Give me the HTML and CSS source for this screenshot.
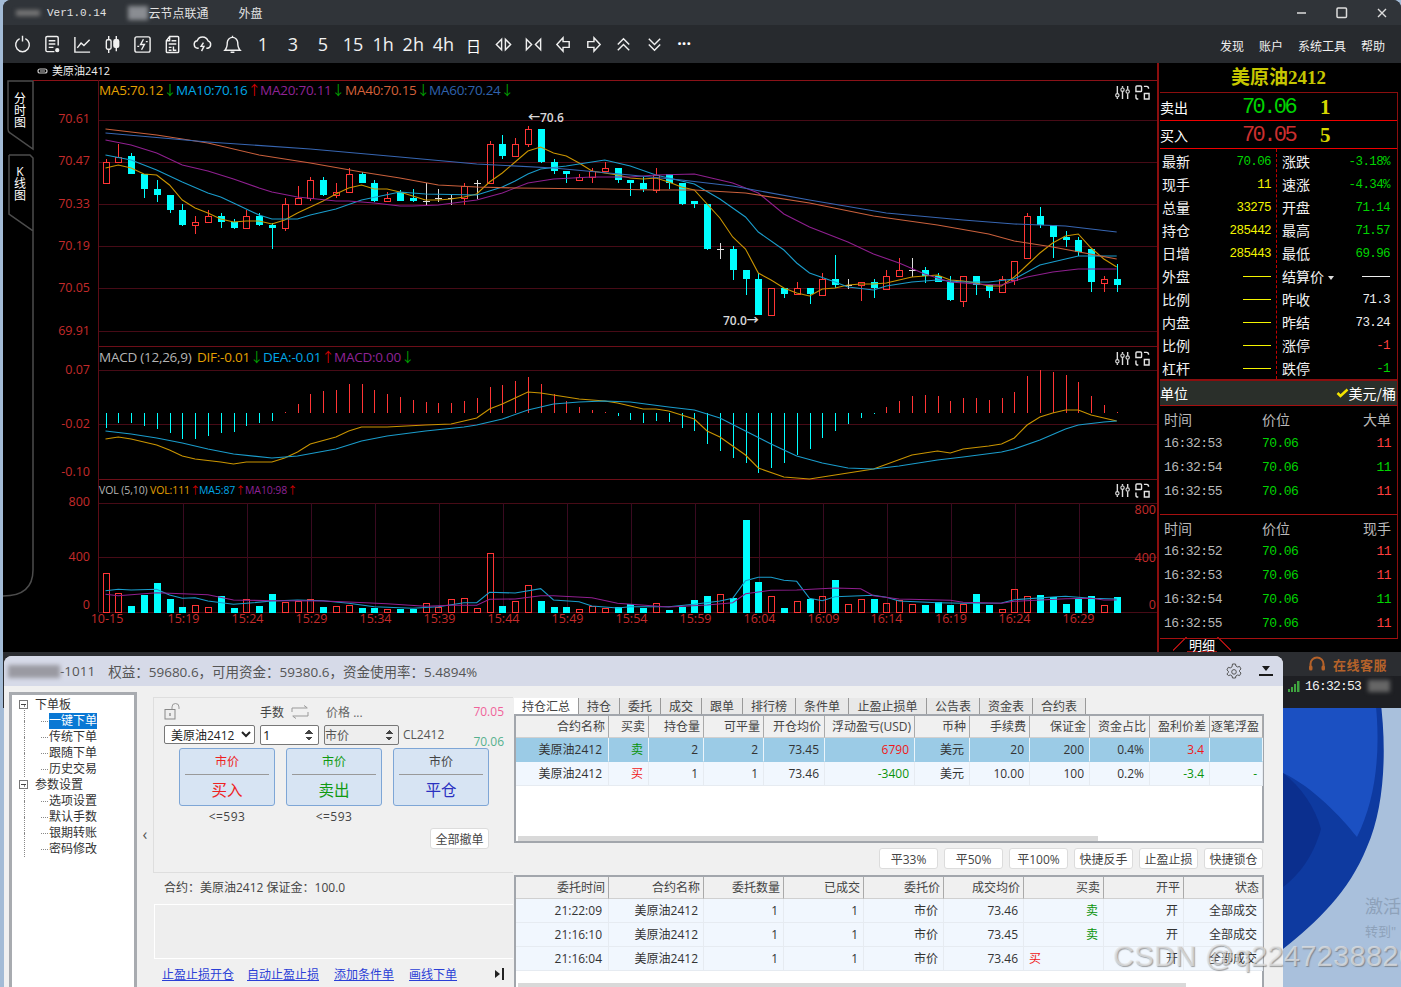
FILE: index.html
```html
<!DOCTYPE html>
<html>
<head>
  <meta charset="UTF-8">
  <title>行情交易终端</title>
  <link rel="stylesheet" href="styles.css">
</head>
<body>
<svg width="0" height="0" class="defs">
  <symbol id="tune" viewBox="0 0 16 16">
    <path d="M2.5 1v8M2.5 13v2M8 1v2M8 7v8M13.5 1v4M13.5 9v6" fill="none" stroke="#ddd" stroke-width="1.5"/>
    <circle cx="2.5" cy="11" r="1.8" fill="none" stroke="#ddd" stroke-width="1.2"/>
    <circle cx="8" cy="5" r="1.8" fill="none" stroke="#ddd" stroke-width="1.2"/>
    <circle cx="13.5" cy="7" r="1.8" fill="none" stroke="#ddd" stroke-width="1.2"/>
  </symbol>
  <symbol id="panes" viewBox="0 0 16 16">
    <path d="M1 7V2a1 1 0 0 1 1-1h4a1 1 0 0 1 1 1v4a1 1 0 0 1-1 1zM9.500 1.500h3q2 0 2 2.500M1 10v3q0 2 2.500 2M10 9h5v6h-5z" fill="none" stroke="#e4e4e4" stroke-width="1.500"/>
  </symbol>
</svg>

<div class="desktop">
  <svg class="wallpaper" viewBox="0 0 118 290" width="118" height="290">
    <rect width="118" height="290" fill="#a9c0dc"/>
    <path d="M0 0H97C104 50 102 110 84 150C66 195 34 225 0 252Z" fill="#0e3aa0"/>
    <path d="M0 0H92C98 50 94 100 74 140C58 120 30 90 0 76Z" fill="#1b50c2"/>
    <path d="M0 76C18 90 32 110 38 132C30 160 16 178 0 190Z" fill="#0b2f8e"/>
  </svg>
  <div class="activate"><b>激活</b><span>转到"</span></div>

  <!-- main quote window -->
  <section class="app">
    <header class="titlebar">
      <i class="blur blur-logo"></i>
      <span class="version">Ver1.0.14</span>
      <i class="blur blur-name"></i>
      <span class="node">云节点联通</span>
      <span class="market">外盘</span>
      <div class="win-btns">
        <svg width="12" height="12" viewBox="0 0 12 12"><path d="M1 6h9" stroke="#ddd" stroke-width="1.400"/></svg>
        <svg width="12" height="12" viewBox="0 0 12 12"><rect x="1" y="1" width="9.500" height="9.500" rx="1" fill="none" stroke="#ddd" stroke-width="1.500"/></svg>
        <svg width="12" height="12" viewBox="0 0 12 12"><path d="M2 2l8 8M10 2l-8 8" stroke="#ddd" stroke-width="1.400"/></svg>
      </div>
    </header>

    <nav class="toolbar">
      <div class="tools">
        <span class="tool"><svg viewBox="0 0 20 20"><path d="M7 3.800A7.200 7.200 0 1 0 13 3.800M10 .8v6" /></svg></span>
        <span class="tool"><svg viewBox="0 0 20 20"><path d="M16 11V3a1.500 1.500 0 0 0-1.500-1.500h-10A1.500 1.500 0 0 0 3 3v13a1.500 1.500 0 0 0 1.500 1.500H12M6 6h7M6 9.500h7M6 13h5"/><circle cx="15" cy="16" r="1.500" class="solid"/></svg></span>
        <span class="tool"><svg viewBox="0 0 20 20"><path d="M2 2v16h16M4.500 13.500l4-5 3 2.500 6-6"/></svg></span>
        <span class="tool"><svg viewBox="0 0 20 20"><path d="M6 1v4M6 15v4M14 1v4M14 13v4"/><rect x="3.500" y="5" width="5" height="10" rx="1.500"/><rect x="11.500" y="5" width="5" height="8" rx="1.500" class="solid"/></svg></span>
        <span class="tool"><svg viewBox="0 0 20 20"><rect x="2" y="2" width="16" height="16" rx="2"/><path d="M11 4.500L8 10h4l-3 5.500M4.500 12h2M13.500 7h2"/></svg></span>
        <span class="tool"><svg viewBox="0 0 20 20"><path d="M7 1.500h8.500a1 1 0 0 1 1 1v15a1 1 0 0 1-1 1h-11a1 1 0 0 1-1-1V6zM7 1.500V6H3.500M9 6h5M6 9.500h8M6 13h3M11 12v4h3M6 16h3"/></svg></span>
        <span class="tool"><svg viewBox="0 0 20 20"><path d="M6 14H5a4 4 0 0 1-.6-7.900A6 6 0 0 1 15.800 6.200 4 4 0 0 1 15 14h-1M11 8l-2.500 4h3L9 17"/></svg></span>
        <span class="tool"><svg viewBox="0 0 20 20"><path d="M2 16h16c-2-2-2.500-3.500-2.500-8a5.500 5.500 0 0 0-11 0c0 4.500-.5 6-2.500 8zM10 .8v1.700M8 18.200h4"/></svg></span>
        <span class="tool tool-text">1</span>
        <span class="tool tool-text">3</span>
        <span class="tool tool-text">5</span>
        <span class="tool tool-text">15</span>
        <span class="tool tool-text">1h</span>
        <span class="tool tool-text">2h</span>
        <span class="tool tool-text">4h</span>
        <span class="tool tool-day">日</span>
        <span class="tool"><svg viewBox="0 0 20 20"><path d="M8 4.500L2.500 10 8 15.500zM12 4.500l5.500 5.500-5.500 5.500z"/></svg></span>
        <span class="tool"><svg viewBox="0 0 20 20"><path d="M2.500 4.500L8 10l-5.500 5.500zM17.500 4.500L12 10l5.500 5.500z"/></svg></span>
        <span class="tool"><svg viewBox="0 0 20 20"><path d="M9.500 3L3 10l6.500 7v-4H16V7H9.500z"/></svg></span>
        <span class="tool"><svg viewBox="0 0 20 20"><path d="M10.500 3L17 10l-6.500 7v-4H4V7h6.500z"/></svg></span>
        <span class="tool"><svg viewBox="0 0 20 20"><path d="M4 10l6-6 6 6M4 16l6-6 6 6"/></svg></span>
        <span class="tool"><svg viewBox="0 0 20 20"><path d="M4 4l6 6 6-6M4 10l6 6 6-6"/></svg></span>
        <span class="tool tool-more">···</span>
      </div>
      <div class="menus">
        <span class="menu-a">发现</span><span class="menu-b">账户</span><span class="menu-c">系统工具</span><span class="menu-d">帮助</span>
      </div>
    </nav>

    <div class="workspace">
      <svg id="chart" class="chart" viewBox="3 63 1154 589" width="1154" height="589">
        <path d="M8 81V129Q8 132 10 133L33 149V81Z" fill="none" stroke="#4c4c4c" stroke-width="1.500"/>
        <path d="M9 155V214L33 231V570Q33 596 3 596M9 155H30L33 158V231" fill="none" stroke="#4c4c4c" stroke-width="1.500"/>
        <text class="tab-label" x="20" y="103">分</text>
        <text class="tab-label" x="20" y="115">时</text>
        <text class="tab-label" x="20" y="127">图</text>
        <text class="tab-label" x="20" y="176">K</text>
        <text class="tab-label" x="20" y="188">线</text>
        <text class="tab-label" x="20" y="200">图</text>

        <path d="M41 69h3M38 71a2 2 0 0 1 2-2h1M44 69h1a2 2 0 0 1 0 4h-6a2 2 0 0 1-1-2M40 71h5" fill="none" stroke="#ccc" stroke-width="1.200"/>
        <text class="contract" x="52" y="75">美原油2412</text>

        <g id="grid"></g>
        <g id="macd-bars"></g>
        <g id="volume"></g>
        <g id="candles"></g>
        <g id="lines"></g>

        <text class="legend ma5" x="99" y="95">MA5:70.12<tspan class="fall">↓</tspan></text>
        <text class="legend ma10" x="176" y="95">MA10:70.16<tspan class="rise">↑</tspan></text>
        <text class="legend ma20" x="260" y="95">MA20:70.11<tspan class="fall">↓</tspan></text>
        <text class="legend ma40" x="345" y="95">MA40:70.15<tspan class="fall">↓</tspan></text>
        <text class="legend ma60" x="429" y="95">MA60:70.24<tspan class="fall">↓</tspan></text>

        <text class="legend plain" x="99" y="362">MACD (12,26,9)</text>
        <text class="legend ma5" x="197" y="362">DIF:-0.01<tspan class="fall">↓</tspan></text>
        <text class="legend ma10" x="263" y="362">DEA:-0.01<tspan class="rise">↑</tspan></text>
        <text class="legend ma20" x="334" y="362">MACD:0.00<tspan class="fall">↓</tspan></text>

        <text class="legend-sm plain" x="99" y="494">VOL (5,10)</text>
        <text class="legend-sm ma5" x="150" y="494">VOL:111<tspan class="rise">↑</tspan></text>
        <text class="legend-sm ma10" x="199" y="494">MA5:87<tspan class="rise">↑</tspan></text>
        <text class="legend-sm ma20" x="245" y="494">MA10:98<tspan class="rise">↑</tspan></text>

        <g class="axis">
          <text x="90" y="123">70.61</text><text x="90" y="165">70.47</text><text x="90" y="208">70.33</text>
          <text x="90" y="250">70.19</text><text x="90" y="292">70.05</text><text x="90" y="335">69.91</text>
          <text x="90" y="374">0.07</text><text x="90" y="428">-0.02</text><text x="90" y="476">-0.10</text>
          <text x="90" y="506">800</text><text x="90" y="561">400</text><text x="90" y="609">0</text>
          <text x="1156" y="514">800</text><text x="1156" y="562">400</text><text x="1156" y="609">0</text>
        </g>
        <g class="axis time">
          <text x="107" y="623">10-15</text><text x="183.500" y="623">15:19</text><text x="247.500" y="623">15:24</text>
          <text x="311.500" y="623">15:29</text><text x="375.500" y="623">15:34</text><text x="439.500" y="623">15:39</text>
          <text x="503.500" y="623">15:44</text><text x="567.500" y="623">15:49</text><text x="631.500" y="623">15:54</text>
          <text x="695.500" y="623">15:59</text><text x="759.500" y="623">16:04</text><text x="823.500" y="623">16:09</text>
          <text x="886.500" y="623">16:14</text><text x="951" y="623">16:19</text><text x="1014.500" y="623">16:24</text>
          <text x="1078.500" y="623">16:29</text>
        </g>

        <text class="mark" x="528" y="122">←70.6</text>
        <text class="mark" x="723" y="325">70.0→</text>

        <use href="#tune" x="1115" y="85" width="15" height="15"/><use href="#panes" x="1135" y="85" width="15" height="15"/>
        <use href="#tune" x="1115" y="351" width="15" height="15"/><use href="#panes" x="1135" y="351" width="15" height="15"/>
        <use href="#tune" x="1115" y="483" width="15" height="15"/><use href="#panes" x="1135" y="483" width="15" height="15"/>
      </svg>

      <aside class="quote">
        <h1 class="quote-title">美原油2412</h1>
        <div class="book">
          <div class="book-row"><span class="book-label">卖出</span><span class="book-price green">70.06</span><span class="book-qty">1</span></div>
          <div class="book-row"><span class="book-label">买入</span><span class="book-price red">70.05</span><span class="book-qty">5</span></div>
        </div>
        <div class="stats">
          <dl class="stat-col">
            <dt>最新</dt><dd class="green">70.06</dd>
            <dt>现手</dt><dd class="yellow">11</dd>
            <dt>总量</dt><dd class="yellow">33275</dd>
            <dt>持仓</dt><dd class="yellow">285442</dd>
            <dt>日增</dt><dd class="yellow">285443</dd>
            <dt>外盘</dt><dd><i class="dash"></i></dd>
            <dt>比例</dt><dd><i class="dash"></i></dd>
            <dt>内盘</dt><dd><i class="dash"></i></dd>
            <dt>比例</dt><dd><i class="dash"></i></dd>
            <dt>杠杆</dt><dd><i class="dash"></i></dd>
          </dl>
          <dl class="stat-col stat-right">
            <dt>涨跌</dt><dd class="green">-3.18%</dd>
            <dt>速涨</dt><dd class="green">-4.34%</dd>
            <dt>开盘</dt><dd class="green">71.14</dd>
            <dt>最高</dt><dd class="green">71.57</dd>
            <dt>最低</dt><dd class="green">69.96</dd>
            <dt>结算价<span class="caret"></span></dt><dd><i class="dash dash-white"></i></dd>
            <dt>昨收</dt><dd class="white">71.3</dd>
            <dt>昨结</dt><dd class="white">73.24</dd>
            <dt>涨停</dt><dd class="soft-red">-1</dd>
            <dt>跌停</dt><dd class="green">-1</dd>
          </dl>
        </div>
        <div class="unit"><span>单位</span><span class="unit-value"><svg width="13" height="10" viewBox="0 0 13 10"><path d="M1.500 5l3 3 7-6.500" fill="none" stroke="#f2e400" stroke-width="2.500"/></svg>美元/桶</span></div>
        <div class="ticks ticks-big">
          <div class="tick-head"><span>时间</span><span>价位</span><span>大单</span></div>
          <div class="tick-row"><span>16:32:53</span><span class="green">70.06</span><span class="soft-red">11</span></div>
          <div class="tick-row"><span>16:32:54</span><span class="green">70.06</span><span class="green">11</span></div>
          <div class="tick-row"><span>16:32:55</span><span class="green">70.06</span><span class="soft-red">11</span></div>
        </div>
        <div class="ticks">
          <div class="tick-head"><span>时间</span><span>价位</span><span>现手</span></div>
          <div class="tick-row"><span>16:32:52</span><span class="green">70.06</span><span class="soft-red">11</span></div>
          <div class="tick-row"><span>16:32:53</span><span class="green">70.06</span><span class="soft-red">11</span></div>
          <div class="tick-row"><span>16:32:54</span><span class="green">70.06</span><span class="green">11</span></div>
          <div class="tick-row"><span>16:32:55</span><span class="green">70.06</span><span class="soft-red">11</span></div>
        </div>
        <div class="quote-tabs"><span class="quote-tab">明细</span></div>
      </aside>
    </div>

    <footer class="appfoot">
      <div class="service">
        <svg width="18" height="16" viewBox="0 0 18 16"><path d="M2.500 11V8a6.500 6.500 0 0 1 13 0v3" fill="none" stroke="#b5622a" stroke-width="2"/><rect x="1" y="9.500" width="3.500" height="5" rx="1.500" fill="#b5622a"/><rect x="13.500" y="9.500" width="3.500" height="5" rx="1.500" fill="#b5622a"/></svg>
        <span>在线客服</span>
      </div>
      <div class="status">
        <svg width="14" height="12" viewBox="0 0 14 12"><path d="M1 9h2v3H1zM4 7h2v5H4zM7 4h2v8H7zM10 1h2.500v11H10z" fill="#3fa33f"/></svg>
        <span class="clock">16:32:53</span>
        <i class="blur blur-status"></i>
      </div>
    </footer>
  </section>

  <!-- order window, floats over the quote window -->
  <section class="order">
    <header class="order-head">
      <i class="blur blur-account"></i>
      <span class="account">-1011</span>
      <span class="funds">权益：59680.6，可用资金：59380.6，资金使用率：5.4894%</span>
      <svg class="gear" width="16" height="16" viewBox="0 0 16 16"><path d="M6.500 1h3l.4 2 1.700 1 2-.6 1.400 2.600-1.500 1.400v1.200l1.500 1.400-1.400 2.600-2-.6-1.700 1-.4 2h-3l-.4-2-1.700-1-2 .6L.9 10.900 2.400 9.500V8.300L.9 6.900 2.300 4.300l2 .6 1.700-1z" fill="none" stroke="#555" stroke-width="1"/><circle cx="8" cy="8.900" r="2.300" fill="none" stroke="#555"/></svg>
      <svg class="collapse" width="14" height="12" viewBox="0 0 14 12"><path d="M3 1h8L7 6zM0 9h14v2H0z" fill="#1a1a1a"/></svg>
    </header>

    <div class="order-body">
      <ul class="tree">
        <li class="tree-group"><i class="tree-box"></i>下单板</li>
        <li class="tree-leaf"><span class="picked">一键下单</span></li>
        <li class="tree-leaf">传统下单</li>
        <li class="tree-leaf">跟随下单</li>
        <li class="tree-leaf tree-end">历史交易</li>
        <li class="tree-group"><i class="tree-box"></i>参数设置</li>
        <li class="tree-leaf">选项设置</li>
        <li class="tree-leaf">默认手数</li>
        <li class="tree-leaf">银期转账</li>
        <li class="tree-leaf tree-end">密码修改</li>
      </ul>

      <div class="fold">&lsaquo;</div>

      <div class="ticket">
        <form class="ticket-form">
          <div class="ticket-top">
            <svg class="lock" width="18" height="17" viewBox="0 0 18 17"><rect x="1" y="6.500" width="10" height="9.500" fill="#eee" stroke="#888"/><path d="M8 6V4a3.500 3.500 0 0 1 7 0v2" fill="none" stroke="#999"/><path d="M6 10v3" stroke="#666"/></svg>
            <span class="lbl-qty">手数</span>
            <svg class="swap" width="18" height="14" viewBox="0 0 18 14"><path d="M1 7V3h15M13 .5L16.500 3M17 7v4H2M5 13.500L1.500 11" fill="none" stroke="#999"/></svg>
            <span class="lbl-price">价格 ...</span>
            <div class="quote-mini"><span class="pink">70.05</span></div>
          </div>
          <div class="ticket-inputs">
            <select class="field-select"><option>美原油2412</option></select>
            <div class="field field-qty"><span>1</span><i class="spin"></i></div>
            <div class="field field-type"><span>市价</span><i class="spin"></i></div>
            <span class="code">CL2412</span>
            <span class="teal">70.06</span>
          </div>
          <div class="trade-row">
            <div class="trade-col">
              <button type="button" class="trade"><span class="trade-kind red-t">市价</span><span class="trade-name red-t">买入</span></button>
              <span class="limit">&lt;=593</span>
            </div>
            <div class="trade-col">
              <button type="button" class="trade"><span class="trade-kind green-t">市价</span><span class="trade-name green-t">卖出</span></button>
              <span class="limit">&lt;=593</span>
            </div>
            <div class="trade-col">
              <button type="button" class="trade"><span class="trade-kind">市价</span><span class="trade-name blue-t">平仓</span></button>
            </div>
          </div>
          <div class="cancel-row"><button type="button" class="plain-btn cancel-all">全部撤单</button></div>
        </form>
        <p class="margin-line">合约：美原油2412 保证金：100.0</p>
        <div class="note-box"></div>
        <div class="links">
          <a>止盈止损开仓</a><a>自动止盈止损</a><a>添加条件单</a><a>画线下单</a>
          <svg class="links-end" width="10" height="12" viewBox="0 0 10 12"><path d="M0 2l5 4-5 4zM7 0h2v12H7z" fill="#222"/></svg>
        </div>
      </div>

      <div class="records">
        <div class="tabs">
          <span class="tab tab-on">持仓汇总</span><span class="tab w41">持仓</span><span class="tab w41">委托</span><span class="tab w41">成交</span><span class="tab w41">跟单</span><span class="tab">排行榜</span><span class="tab">条件单</span><span class="tab tab-wide">止盈止损单</span><span class="tab">公告表</span><span class="tab">资金表</span><span class="tab">合约表</span>
        </div>
        <div class="table table-pos">
          <div class="tr th"><span>合约名称</span><span>买卖</span><span>持仓量</span><span>可平量</span><span>开仓均价</span><span>浮动盈亏(USD)</span><span>币种</span><span>手续费</span><span>保证金</span><span>资金占比</span><span>盈利价差</span><span>逐笔浮盈</span></div>
          <div class="tr td tr-on"><span>美原油2412</span><span class="deal-sell">卖</span><span>2</span><span>2</span><span>73.45</span><span class="deal-buy">6790</span><span>美元</span><span>20</span><span>200</span><span>0.4%</span><span class="deal-buy">3.4</span><span></span></div>
          <div class="tr td"><span>美原油2412</span><span class="deal-buy">买</span><span>1</span><span>1</span><span>73.46</span><span class="deal-sell">-3400</span><span>美元</span><span>10.00</span><span>100</span><span>0.2%</span><span class="deal-sell">-3.4</span><span class="deal-sell">-</span></div>
          <div class="scroll scroll-pos"></div>
        </div>
        <div class="quick">
          <button type="button" class="plain-btn">平33%</button><button type="button" class="plain-btn">平50%</button><button type="button" class="plain-btn">平100%</button><button type="button" class="plain-btn">快捷反手</button><button type="button" class="plain-btn">止盈止损</button><button type="button" class="plain-btn">快捷锁仓</button>
        </div>
        <div class="table table-ord">
          <div class="tr th"><span>委托时间</span><span>合约名称</span><span>委托数量</span><span>已成交</span><span>委托价</span><span>成交均价</span><span>买卖</span><span>开平</span><span>状态</span></div>
          <div class="tr td"><span>21:22:09</span><span>美原油2412</span><span>1</span><span>1</span><span>市价</span><span>73.46</span><span class="deal-sell">卖</span><span>开</span><span>全部成交</span></div>
          <div class="tr td"><span>21:16:10</span><span>美原油2412</span><span>1</span><span>1</span><span>市价</span><span>73.45</span><span class="deal-sell">卖</span><span>开</span><span>全部成交</span></div>
          <div class="tr td"><span>21:16:04</span><span>美原油2412</span><span>1</span><span>1</span><span>市价</span><span>73.46</span><span class="deal-buy left">买</span><span>开</span><span>全部成交</span></div>
          <div class="scroll scroll-ord"></div>
        </div>
      </div>
    </div>
  </section>

  <div class="watermark">CSDN @q2247238820</div>
</div>

<script src="chart.js"></script>
</body>
</html>
```

FILE: styles.css
```css
* {
  box-sizing: border-box;
}
html, body {
  margin: 0;
  height: 100%;
  overflow: hidden;
}
body {
  font-family: "Open Sans", "Noto Sans CJK SC", sans-serif;
  background: #a3bbd6;
}
.defs {
  position: absolute;
}
.desktop {
  position: relative;
  width: 1401px;
  height: 987px;
  overflow: hidden;
}
.wallpaper {
  position: absolute;
  left: 1283px;
  top: 697px;
}
.activate {
  position: absolute;
  left: 1365px;
  top: 893px;
  width: 36px;
  overflow: hidden;
  white-space: nowrap;
  color: #8ea2ba;
}
.activate b {
  display: block;
  font-weight: 400;
  font-size: 18px;
  line-height: 26px;
}
.activate span {
  font-size: 13px;
  line-height: 20px;
}
.watermark {
  position: absolute;
  left: 1113px;
  top: 940px;
  font: 29px "Liberation Sans", sans-serif;
  letter-spacing: .3px;
  color: rgba(226, 226, 226, .72);
  text-shadow: 1px 1px 1px rgba(90, 90, 90, .55);
  white-space: nowrap;
}
.blur {
  display: block;
  background: #8a8d92;
  filter: blur(2px);
}

/* quote window */
.app {
  position: absolute;
  left: 3px;
  top: 0;
  width: 1398px;
  height: 708px;
  border-radius: 8px 8px 0 0;
  background: #2b2d31;
  color: #fff;
  overflow: hidden;
}
.titlebar {
  display: flex;
  align-items: center;
  height: 25px;
  background: #303439;
  font-size: 12px;
  color: #e2e2e2;
}
.blur-logo {
  width: 24px;
  height: 6px;
  margin-left: 13px;
  background: #777;
}
.version {
  margin-left: 7px;
  font: 11px "Liberation Mono", monospace;
}
.blur-name {
  width: 20px;
  height: 14px;
  margin-left: 22px;
}
.node {
  margin-left: 0;
}
.market {
  margin-left: 30px;
}
.win-btns {
  display: flex;
  gap: 28px;
  margin-left: auto;
  margin-right: 13px;
}
.toolbar {
  display: flex;
  justify-content: space-between;
  align-items: center;
  height: 38px;
  background: #272a2e;
}
.tools {
  display: flex;
  margin-left: 4px;
}
.tool {
  display: flex;
  align-items: center;
  justify-content: center;
  width: 30.1px;
  height: 30px;
}
.tool svg {
  width: 19px;
  height: 19px;
  fill: none;
  stroke: #f0f0f0;
  stroke-width: 1.5;
}
.tool svg .solid {
  fill: #f0f0f0;
}
.tool-text {
  font: 18px "Open Sans", sans-serif;
  color: #f2f2f2;
}
.tool-day {
  font-size: 15px;
  padding-top: 3px;
}
.tool-more {
  font-size: 16px;
  font-weight: 700;
  padding-bottom: 2px;
}
.menus {
  position: relative;
  font-size: 12px;
  color: #f0f0f0;
  display: flex;
  margin-right: 16px;
  padding-top: 4px;
}
.menu-b {
  margin-left: 15px;
}
.menu-c {
  margin-left: 15px;
}
.menu-d {
  margin-left: 15px;
}
.workspace {
  display: flex;
  height: 589px;
  background: #000;
}
.chart {
  display: block;
  flex: none;
  background: #000;
}
.tab-label {
  font-size: 12px;
  fill: #fff;
  text-anchor: middle;
}
.contract {
  font-size: 11px;
  fill: #eee;
}
.legend {
  font-size: 13.5px;
  letter-spacing: -.25px;
}
.legend-sm {
  font-size: 10.5px;
  letter-spacing: -.1px;
}
.ma5 { fill: #e5a100; }
.ma10 { fill: #00a7e6; }
.ma20 { fill: #8f2396; }
.ma40 { fill: #d4603a; }
.ma60 { fill: #2f62ad; }
.plain { fill: #b5b5b5; }
.rise { fill: #d00000; }
.fall { fill: #00a000; }
.axis text {
  font-size: 12.5px;
  fill: #c42b2b;
  text-anchor: end;
}
.axis.time text {
  text-anchor: middle;
}
.mark {
  font-size: 12px;
  font-weight: 600;
  fill: #d8d8d8;
}

/* right side quote panel */
.quote {
  flex: none;
  position: relative;
  width: 244px;
  border-left: 2px solid #8b0e0e;
  padding-right: 3px;
  font-family: "Noto Sans CJK SC", sans-serif;
  font-size: 14px;
  background: #000;
}
.quote-title {
  margin: 0;
  height: 29px;
  font: 700 19px/29px "Liberation Serif", "Noto Sans CJK SC", serif;
  text-align: center;
  color: #c6c600;
}
.book {
  border: 1px solid #8b0e0e;
  border-bottom: 0;
  border-left: 0;
  margin-left: 1px;
}
.book-row {
  display: grid;
  grid-template-columns: 80px 55px 1fr;
  align-items: center;
  height: 28px;
  border-bottom: 1px solid #ee0000;
}
.book-label {
  line-height: 28px;
}
.book-price {
  font: 22px "Liberation Mono", monospace;
  letter-spacing: -2.6px;
  white-space: nowrap;
  text-align: right;
}
.book-qty {
  padding-left: 25px;
  font: 700 21px "Liberation Serif", serif;
  color: #d7d700;
}
.green { color: #00d400; }
.red { color: #cc2f2f; }
.yellow { color: #f4f400; }
.white { color: #eee; }
.soft-red { color: #ff3f3f; }
.stats {
  display: flex;
  height: 232px;
  margin-left: 1px;
  border-right: 1px solid #8b0e0e;
  border-bottom: 2px solid #8b0e0e;
}
.stat-col {
  display: grid;
  grid-template-columns: auto 1fr;
  grid-auto-rows: 23px;
  align-items: center;
  width: 116px;
  margin: 0;
  padding: 1px 5px 0 2px;
}
.stat-right {
  flex: 1;
  padding: 1px 7px 0 5px;
  border-left: 1px dashed #c40000;
}
.stat-col dt {
  line-height: 23px;
  color: #f2f2f2;
  white-space: nowrap;
}
.stat-col dd {
  margin: 0;
  text-align: right;
  font: 12.5px "Liberation Mono", monospace;
  letter-spacing: -.6px;
}
.dash {
  display: inline-block;
  width: 28px;
  vertical-align: middle;
  border-top: 1px solid #f4f400;
}
.dash-white {
  border-color: #eee;
}
.caret {
  display: inline-block;
  margin-left: 4px;
  vertical-align: middle;
  border-left: 3.5px solid transparent;
  border-right: 3.5px solid transparent;
  border-top: 4px solid #ddd;
}
.unit {
  display: flex;
  justify-content: space-between;
  align-items: center;
  height: 25px;
  margin-left: 1px;
  background: #2a2f2a;
  border-bottom: 1px solid #a51010;
  border-right: 1px solid #8b0e0e;
  padding-right: 1px;
}
.unit-value {
  display: flex;
  align-items: center;
  gap: 0;
}
.ticks {
  margin-left: 1px;
  padding: 0 6px 0 4px;
  border-right: 1px solid #8b0e0e;
  border-bottom: 1px solid #a51010;
  font-size: 14px;
}
.ticks-big {
  height: 109px;
}
.tick-head, .tick-row {
  display: grid;
  grid-template-columns: 98px 1fr 40px;
  align-items: center;
  height: 24px;
  color: #b9b9b9;
}
.tick-head span:last-child, .tick-row span:last-child {
  text-align: right;
}
.ticks-big .tick-head {
  height: 25px;
}
.tick-head {
  padding-top: 1px;
}
.tick-row {
  font: 13px "Liberation Mono", monospace;
  letter-spacing: -.55px;
}
.ticks .tick-row .green, .ticks .tick-row .soft-red {
  letter-spacing: -.55px;
}
.ticks:not(.ticks-big) {
  height: 124px;
}
.quote-tabs {
  height: 14px;
}
.quote-tab {
  position: absolute;
  left: 14px;
  bottom: 0;
  width: 58px;
  height: 15px;
  font-size: 13px;
  line-height: 15px;
  text-align: center;
  color: #fff;
  background: linear-gradient(#a51010, #a51010) 14px 100% / 30px 1px no-repeat,
    linear-gradient(45deg, transparent 48%, #a51010 48%, #a51010 55%, transparent 55%) 44px 0 / 14px 14px no-repeat,
    linear-gradient(-45deg, transparent 48%, #a51010 48%, #a51010 55%, transparent 55%) 0 0 / 14px 14px no-repeat;
}

.appfoot {
  height: 56px;
  padding-left: 1280px;
}
.service {
  display: flex;
  align-items: center;
  gap: 7px;
  height: 24px;
  padding-left: 25px;
  font-size: 13px;
  font-weight: 700;
  letter-spacing: .5px;
  color: #b5622a;
  white-space: nowrap;
}
.status {
  display: flex;
  align-items: center;
  height: 32px;
  margin-left: -4px;
  padding: 0 0 12px 8px;
  background: #1e1f23;
  border-radius: 0 0 0 0;
}
.clock {
  margin-left: 4px;
  font: 13px "Liberation Mono", monospace;
  letter-spacing: -.8px;
  color: #f0f0f0;
}
.blur-status {
  width: 22px;
  height: 12px;
  margin-left: 7px;
  background: #666;
}

/* order window */
.order {
  position: absolute;
  left: 4px;
  top: 656px;
  width: 1279px;
  height: 331px;
  border-radius: 8px 8px 0 0;
  background: #f0f0f0;
  overflow: hidden;
  color: #333;
  font-size: 12px;
}
.order-head {
  display: flex;
  align-items: center;
  height: 30px;
  background: #d6dae8;
  font-size: 13.5px;
  color: #555;
}
.blur-account {
  width: 52px;
  height: 13px;
  margin-left: 4px;
  background: #9a9aa2;
}
.funds {
  margin-left: 13px;
  white-space: nowrap;
}
.gear {
  margin-left: auto;
}
.collapse {
  margin: 0 10px 0 17px;
}
.order-body {
  display: flex;
}
.tree {
  flex: none;
  width: 128px;
  height: 301px;
  margin: 6px 0 0 5px;
  padding: 2px 0 0;
  list-style: none;
  border: 3px solid #a8abb0;
  border-bottom: 0;
  background: #fff;
  font-size: 12px;
  color: #333;
}
.tree-group, .tree-leaf {
  position: relative;
  height: 16px;
  line-height: 16px;
  white-space: nowrap;
}
.tree-group {
  padding-left: 23px;
}
.tree-leaf {
  padding-left: 37px;
}
.tree-leaf::before {
  content: "";
  position: absolute;
  left: 12px;
  top: -8px;
  bottom: 0;
  border-left: 1px dotted #888;
}
.tree-leaf::after {
  content: "";
  position: absolute;
  left: 29px;
  width: 7px;
  top: 8px;
  height: 0;
  border-top: 1px dotted #888;
}
.tree-box {
  position: absolute;
  left: 7px;
  top: 3px;
  width: 9px;
  height: 9px;
  border: 1px solid #777;
  background: linear-gradient(#444, #444) center / 5px 1px no-repeat #fff;
}
.picked {
  display: inline-block;
  background: #0a78d4;
  color: #fff;
}
.fold {
  flex: none;
  width: 16px;
  padding-top: 137px;
  text-align: center;
  font-size: 16px;
  color: #555;
}
.ticket {
  flex: none;
  width: 360px;
  padding-top: 11px;
}
.ticket-form {
  height: 176px;
  padding: 0 0 0 10px;
  border: 1px solid #dedede;
  border-right: 0;
}
.ticket-top {
  position: relative;
  display: flex;
  align-items: center;
  height: 24px;
  padding-top: 3px;
}
.lock {
  flex: none;
}
.lbl-qty {
  margin-left: 78px;
  color: #444;
}
.swap {
  margin-left: 7px;
}
.lbl-price {
  margin-left: 17px;
  color: #666;
}
.quote-mini {
  margin-left: auto;
  margin-right: 9px;
}
.pink {
  color: #f0639a;
}
.ticket-inputs {
  display: flex;
  align-items: center;
  height: 21px;
  margin-top: 2px;
}
.field-select {
  width: 91px;
  height: 19px;
  padding: 0 0 0 2px;
  border: 1px solid #777;
  border-radius: 2px;
  background: #fff;
  font: 12px "Open Sans", "Noto Sans CJK SC", sans-serif;
  color: #222;
}
.field {
  position: relative;
  display: flex;
  align-items: center;
  height: 20px;
  border: 1px solid #777;
  border-radius: 2px;
}
.field-qty {
  width: 59px;
  margin-left: 5px;
  padding-left: 2px;
  background: #fff;
  font-size: 13px;
  color: #111;
}
.field-type {
  width: 75px;
  margin-left: 5px;
  padding-left: 0;
  background: #eee;
  color: #555;
}
.spin {
  position: absolute;
  right: 5px;
  top: 4px;
  width: 8px;
  height: 11px;
  background:
    linear-gradient(to top left, #444 50%, transparent 50%) 0 0 / 4px 4px no-repeat,
    linear-gradient(to top right, #444 50%, transparent 50%) 4px 0 / 4px 4px no-repeat,
    linear-gradient(to bottom left, #444 50%, transparent 50%) 0 7px / 4px 4px no-repeat,
    linear-gradient(to bottom right, #444 50%, transparent 50%) 4px 7px / 4px 4px no-repeat;
}
.code {
  margin-left: 4px;
  color: #555;
}
.teal {
  margin-left: auto;
  margin-right: 9px;
  padding-top: 13px;
  color: #55b08e;
}
.trade-row {
  display: flex;
  gap: 11px;
  margin-top: 3px;
  padding-left: 15px;
}
.trade-col {
  display: flex;
  flex-direction: column;
  align-items: center;
  width: 96px;
}
.trade {
  display: flex;
  flex-direction: column;
  align-items: stretch;
  width: 96px;
  height: 58px;
  padding: 0 5px;
  border: 1px solid #7ea6d6;
  border-radius: 3px;
  background: #d7e4f3;
  font-family: inherit;
  color: #444;
}
.trade-kind {
  height: 26px;
  padding-top: 2px;
  font-size: 12px;
  line-height: 22px;
  border-bottom: 1px solid #999;
}
.trade-name {
  font-size: 15.500px;
  line-height: 30px;
}
.red-t { color: #ee2222; }
.green-t { color: #109a10; }
.blue-t { color: #2a30c0; }
.limit {
  margin-top: 2px;
  line-height: 17px;
  color: #444;
  letter-spacing: .4px;
}
.cancel-row {
  display: flex;
  justify-content: flex-end;
  margin-top: 3px;
  padding-right: 24px;
  height: 21px;
}
.plain-btn {
  padding: 0;
  border: 1px solid #dcdcdc;
  border-radius: 3px;
  background: #fff;
  font: 12px "Open Sans", "Noto Sans CJK SC", sans-serif;
  color: #444;
}
.cancel-all {
  width: 59px;
  height: 21px;
}
.margin-line {
  margin: 0;
  height: 31px;
  padding-left: 11px;
  font-size: 12px;
  line-height: 30px;
  color: #444;
}
.note-box {
  height: 55px;
  margin-left: 1px;
  background: #eee;
  border-top: 1px solid #fff;
  border-left: 1px solid #fff;
  border-bottom: 1px solid #fff;
}
.links {
  display: flex;
  align-items: center;
  height: 30px;
  padding-left: 9px;
  gap: 15px;
  white-space: nowrap;
}
.links a {
  color: #2b3fd6;
  text-decoration: underline;
  font-size: 12px;
}
.links a:first-child {
  width: 70px;
}
.links-end {
  margin-left: 23px;
}
.records {
  flex: none;
  width: 750px;
  margin-left: 1px;
  padding-top: 12px;
}
.tabs {
  display: flex;
  height: 16px;
  font-size: 12px;
  color: #444;
}
.tab {
  width: 53px;
  padding-top: 1px;
  line-height: 16px;
  text-align: center;
  background: #e8e8e8;
  border-right: 1px solid #999;
}
.w41 {
  width: 41px;
}
.tab-on {
  width: 65px;
  background: #fff;
}
.tab-wide {
  width: 78px;
}
.table {
  position: relative;
  border: 2px solid #a2a6ac;
  border-bottom-width: 2px;
  background: #fff;
  font-size: 12px;
  color: #333;
}
.table-pos {
  height: 129px;
}
.table-ord {
  height: 113px;
  border-bottom: 0;
}
.table-pos .tr {
  grid-template-columns: 93px 40px 55px 60px 61px 90px 55px 60px 60px 60px 60px 53px;
}
.table-ord .tr {
  grid-template-columns: 93px 95px 80px 80px 80px 80px 80px 80px 79px;
}
.tr {
  display: grid;
  height: 24px;
  background: #f1f7fe;
}
.tr span {
  padding-right: 5px;
  line-height: 23px;
  text-align: right;
  white-space: nowrap;
  overflow: hidden;
  border-right: 1px solid #e6ebf1;
  border-bottom: 1px solid #e6ebf1;
}
.td span:first-child {
  padding-right: 6px;
}
.th {
  height: 22px;
  background: #f0f0f0;
  color: #444;
}
.th span {
  padding-right: 3px;
  line-height: 21px;
  border-right: 1px solid #aaa;
  border-bottom: 1px solid #d0d0d0;
}
.tr-on {
  background: #9bcbe6;
}
.tr-on span {
  border-color: #eaf4fa;
  border-bottom-color: #9bcbe6;
}
.deal-buy {
  color: #f01818;
}
.deal-sell {
  color: #0a930a;
}
.tr .left {
  text-align: left;
  padding-left: 5px;
}
.scroll {
  position: absolute;
  left: 2px;
  height: 5px;
  background: #d9d9d9;
}
.scroll-pos {
  bottom: 0;
  width: 580px;
}
.scroll-ord {
  bottom: 0;
  width: 668px;
}
.quick {
  display: flex;
  justify-content: flex-end;
  align-items: center;
  gap: 6px;
  height: 32px;
  padding-bottom: 1px;
  padding-right: 1px;
}
.quick .plain-btn {
  width: 59px;
  height: 21px;
}
```

FILE: chart.js
```js
// candle columns sit on a fixed step, everything else is screen y
var STEP = 12.8
var LEFT = 105.5
var UP = '#ff3535'
var DOWN = '#00ffff'
var DOJI = '#dddddd'

function cx (i) {
  return Math.round(LEFT + STEP * i) + 0.5
}

// kind, wick top, body top, body bottom, wick bottom
var candles = [
  ['r',159,162,183,183],['r',144,157,162,162],['c',153,156,174,174],['c',174,174,189,198],['c',180,189,195,202],
  ['c',195,195,210,213],['c',204,210,225,226],['r',216,222,225,234],['r',210,216,222,222],['c',213,216,222,228],
  ['c',219,222,228,229],['r',210,216,228,228],['c',213,216,225,226],['c',223,225,228,249],['r',198,204,228,231],
  ['r',186,198,204,204],['r',177,180,198,201],['c',177,180,195,196],['r',183,192,195,198],['r',168,174,192,192],
  ['c',172,174,183,183],['c',180,183,201,202],['r',192,198,201,201],['c',190,192,201,201],['c',189,198,201,202],
  ['w',183,201,201,205],['w',189,198,198,202],['w',195,198,198,205],['r',183,186,198,205],['w',180,183,183,199],
  ['r',141,144,183,183],['c',135,144,156,159],['r',138,144,156,156],['r',126,129,144,147],['c',129,129,162,163],
  ['c',159,162,171,174],['c',171,171,174,183],['r',174,177,180,180],['r',168,171,177,183],['r',162,168,171,171],
  ['c',168,168,180,183],['c',180,180,183,196],['c',177,183,189,192],['r',168,175,190,193],['c',174,174,183,189],
  ['c',183,183,204,205],['c',201,201,204,208],['c',204,204,249,250],['w',243,249,249,259],['c',246,249,270,280],
  ['c',270,270,279,295],['c',273,279,315,315],['r',288,288,315,315],['c',288,288,294,298],['r',282,288,294,294],
  ['c',288,288,294,304],['r',273,279,295,295],['c',255,279,285,288],['w',279,285,285,289],['r',282,282,285,301],
  ['c',279,282,288,298],['r',270,276,289,289],['r',258,270,276,276],['w',258,270,270,277],['c',267,270,276,283],
  ['c',273,276,282,282],['c',276,282,300,301],['r',276,276,301,307],['c',276,276,285,295],['c',285,285,291,298],
  ['r',276,279,292,292],['r',261,261,280,285],['r',213,216,258,258],['c',207,216,225,228],['c',225,225,237,258],
  ['c',231,237,240,247],['c',237,240,252,256],['c',249,249,282,292],['r',276,279,283,292],['c',264,279,285,292]
]

// macd bar ends and volume tops, read in thirds of a pixel from the row origin
var macdEnds = [250,233,233,243,252,264,282,282,272,265,260,243,235,228,202,177,146,138,134,118,118,135,146,156,165,170,173,175,167,160,127,120,108,95,118,146,168,187,196,202,212,224,235,229,231,248,258,297,317,340,353,383,369,354,330,312,279,257,237,218,207,186,167,153,150,153,169,159,160,165,159,141,94,76,80,90,112,153,179,202]
var volTops = [685,745,783,750,714,762,786,781,787,754,789,763,783,747,770,767,763,786,784,781,789,789,793,792,791,775,787,763,760,790,625,783,769,721,768,786,786,793,784,790,787,777,789,775,795,787,765,753,748,759,525,711,754,789,769,762,754,705,778,763,762,775,766,778,780,772,780,777,747,780,793,733,754,750,757,777,762,753,781,756]
var volUp = [0,1,7,8,11,14,15,16,18,19,22,25,26,27,28,29,30,32,33,37,38,39,43,48,52,54,56,58,59,61,62,63,67,70,71,72,78]

var lineSets = {
  ma5: [[0,168],[1,165],[2,168],[3,174],[4,175],[5,185],[6,200],[7,208],[8,213],[9,219],[10,222],[11,221],[12,221],[13,224],[14,220],[15,213],[16,207],[17,201],[18,194],[19,188],[20,185],[21,189],[22,189],[23,192],[24,196],[25,200],[26,200],[27,199],[28,197],[29,194],[30,182],[31,173],[32,162],[33,151],[34,147],[35,153],[36,156],[37,163],[38,171],[39,173],[40,175],[41,178],[42,179],[43,178],[44,182],[45,187],[46,190],[47,204],[48,218],[49,237],[50,249],[51,273],[52,280],[53,288],[54,293],[55,296],[56,289],[57,288],[58,285],[59,284],[60,284],[61,283],[62,280],[63,277],[64,276],[65,275],[66,280],[67,281],[68,283],[69,286],[70,286],[71,277],[72,265],[73,253],[74,243],[75,236],[76,234],[77,248],[78,259],[79,267]],
  ma10: [[0,155],[2,160],[4,170],[6,182],[8,193],[9,197],[10,203],[12,215],[13,219],[15,219],[16,215],[18,209],[20,200],[23,192],[25,194],[29,195],[30,191],[31,187],[32,181],[33,174],[34,169],[36,166],[38,162],[39,160],[41,166],[43,175],[45,181],[46,184],[48,199],[50,217],[51,232],[53,250],[54,263],[55,273],[57,282],[58,287],[60,290],[61,286],[63,282],[65,280],[67,282],[69,282],[71,279],[73,265],[76,256],[79,256]],
  ma20: [[0,140],[2,145],[4,153],[6,165],[8,171],[10,179],[12,188],[13,192],[15,197],[18,201],[19,201],[21,203],[23,206],[24,206],[26,205],[29,200],[31,193],[33,183],[35,179],[38,177],[41,177],[43,175],[46,174],[49,183],[51,193],[53,214],[55,227],[58,242],[60,254],[62,263],[64,274],[66,282],[68,284],[70,285],[72,277],[74,272],[76,269],[79,269]],
  ma40: [[0,129],[4,135],[8,143],[12,155],[16,163],[20,172],[23,178],[26,185],[29,187],[32,188],[39,189],[43,190],[46,190],[50,193],[55,203],[60,216],[65,225],[69,234],[71,241],[74,247],[79,259]],
  ma60: [[0,133],[8,142],[16,149],[23,157],[29,164],[35,168],[41,175],[45,180],[49,186],[55,200],[61,213],[67,220],[71,224],[75,226],[79,232]]
}
var macdLines = {
  ma5: [[0,439],[1,437],[2,439],[4,445],[5,450],[6,456],[7,459],[9,462],[10,464],[11,462],[13,462],[14,458],[15,452],[16,444],[18,437],[19,431],[20,427],[22,427],[25,425],[27,424],[29,418],[30,409],[31,404],[32,398],[33,392],[34,393],[35,395],[37,399],[39,401],[40,403],[42,409],[43,409],[44,411],[46,419],[47,431],[48,437],[50,455],[51,468],[53,477],[55,479],[57,475],[60,469],[63,455],[65,451],[66,453],[67,449],[69,446],[70,444],[71,438],[72,425],[73,417],[74,413],[75,410],[76,410],[77,415],[79,421]],
  ma10: [[0,431],[2,434],[4,438],[6,443],[8,449],[10,454],[13,458],[15,456],[18,449],[20,441],[22,436],[25,431],[28,427],[29,425],[31,419],[33,410],[35,404],[37,402],[39,401],[41,402],[44,407],[46,410],[48,418],[50,431],[52,444],[54,456],[56,463],[58,468],[60,469],[62,466],[65,460],[67,457],[70,452],[71,449],[73,440],[75,429],[76,425],[78,422],[79,421]]
}
var volLines = {
  ma10: [[0,737],[1,733],[2,735],[4,733],[5,750],[6,760],[7,758],[8,768],[10,778],[11,775],[13,768],[15,765],[17,767],[19,775],[21,785],[24,790],[26,785],[28,773],[29,773],[30,742],[32,744],[34,731],[35,765],[37,770],[38,783],[40,789],[41,785],[44,785],[46,778],[48,768],[49,760],[50,707],[51,697],[52,697],[53,706],[54,709],[55,760],[56,767],[57,755],[60,751],[61,757],[62,768],[65,773],[67,775],[70,774],[71,764],[74,756],[75,754],[77,760],[79,762]],
  ma20: [[0,748],[1,752],[4,743],[5,745],[8,749],[10,765],[13,767],[17,768],[19,771],[22,776],[25,784],[27,781],[29,781],[30,763],[32,762],[34,752],[35,752],[38,758],[40,775],[44,786],[47,780],[49,773],[50,746],[52,736],[54,735],[57,729],[59,731],[60,752],[62,762],[66,766],[67,772],[70,775],[71,769],[75,761],[77,760],[78,765],[79,765]]
}
var colors = { ma5: '#c99400', ma10: '#1a9ccb', ma20: '#8f1f8f', ma40: '#c9603c', ma60: '#3766b2' }

function row (z) {
  return 345 + z / 3
}

function seg (x1, y1, x2, y2, color) {
  return '<line x1="' + x1 + '" y1="' + y1 + '" x2="' + x2 + '" y2="' + y2 + '" stroke="' + color + '"/>'
}

function box (x, y, w, h, color, filled) {
  return '<rect x="' + x + '" y="' + y + '" width="' + w + '" height="' + h + '" fill="' + (filled ? color : 'none') + '" stroke="' + (filled ? 'none' : color) + '"/>'
}

function polyline (points, color, toY) {
  var str = points.map(function (p) {
    return (LEFT + STEP * p[0]).toFixed(1) + ',' + (toY ? toY(p[1]) : p[1]).toFixed(1)
  }).join(' ')
  return '<polyline points="' + str + '" fill="none" stroke="' + color + '" stroke-width="1.1"/>'
}

function drawGrid () {
  var html = ''
  var dim = '#470b16'
  ;[120.5, 162.5, 204.5, 246.5, 288.5, 331.5, 370.5, 424.5, 503.5, 557.5, 612.5].forEach(function (y) {
    html += seg(99, y, 1157, y, dim)
  })
  html += seg(33, 80.5, 1157, 80.5, '#8a1218')
  html += seg(99, 346.5, 1157, 346.5, '#6d0e18')
  html += seg(99, 479.5, 1157, 479.5, '#6d0e18')
  html += seg(98.5, 80, 98.5, 612, '#5c0c16')
  for (var k = 0; k < 15; k++) {
    var x = 183.5 + 64 * k
    html += seg(x, 503, x, 612, '#3a0a20')
  }
  document.querySelector('#grid').innerHTML = html
}

function drawCandles () {
  var html = ''
  candles.forEach(function (c, i) {
    var x = cx(i)
    var color = c[0] === 'r' ? UP : c[0] === 'c' ? DOWN : DOJI
    html += seg(x, c[1], x, c[2], color) + seg(x, c[3], x, c[4], color)
    if (c[0] === 'r') {
      html += box(x - 3, c[2] + 0.5, 6, c[3] - c[2], color, false)
    } else if (c[0] === 'c') {
      html += box(x - 3.5, c[2], 7, c[3] - c[2], color, true)
    } else {
      html += seg(x - 3.5, c[2] + 0.5, x + 3.5, c[2] + 0.5, color)
    }
  })
  var g = document.querySelector('#candles')
  g.innerHTML = html
  g.setAttribute('shape-rendering', 'crispEdges')
}

function drawMacd () {
  var html = ''
  macdEnds.forEach(function (z, i) {
    var x = cx(i)
    var y = row(z)
    html += seg(x, 413, x, y, y > 413 ? DOWN : UP)
  })
  var g = document.querySelector('#macd-bars')
  g.innerHTML = html
  g.setAttribute('shape-rendering', 'crispEdges')
}

function drawVolume () {
  var html = ''
  volTops.forEach(function (z, i) {
    var x = cx(i)
    var y = Math.round(row(z))
    if (volUp.indexOf(i) >= 0) {
      html += box(x - 3, y + 0.5, 6, 612 - y, UP, false)
    } else {
      html += box(x - 3.5, y, 7, 612.5 - y, DOWN, true)
    }
  })
  var g = document.querySelector('#volume')
  g.innerHTML = html
  g.setAttribute('shape-rendering', 'crispEdges')
}

function drawLines () {
  var html = ''
  for (var k in lineSets) html += polyline(lineSets[k], colors[k])
  for (var m in macdLines) html += polyline(macdLines[m], colors[m])
  for (var v in volLines) html += polyline(volLines[v], colors[v], row)
  document.querySelector('#lines').innerHTML = html
}

drawGrid()
drawMacd()
drawVolume()
drawCandles()
drawLines()
```
